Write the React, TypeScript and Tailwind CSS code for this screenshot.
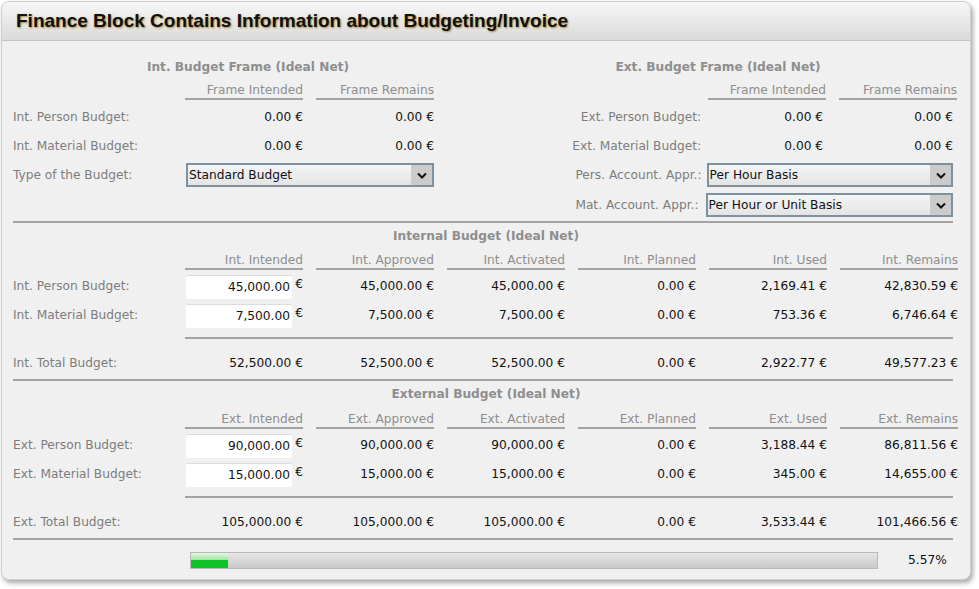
import React from "react";

type Row = { label: string; values: string[]; input?: boolean };

const intRows: Row[] = [
  { label: "Int. Person Budget:", values: ["45,000.00", "45,000.00 €", "45,000.00 €", "0.00 €", "2,169.41 €", "42,830.59 €"], input: true },
  { label: "Int. Material Budget:", values: ["7,500.00", "7,500.00 €", "7,500.00 €", "0.00 €", "753.36 €", "6,746.64 €"], input: true },
];
const intTotal: Row = { label: "Int. Total Budget:", values: ["52,500.00 €", "52,500.00 €", "52,500.00 €", "0.00 €", "2,922.77 €", "49,577.23 €"] };

const extRows: Row[] = [
  { label: "Ext. Person Budget:", values: ["90,000.00", "90,000.00 €", "90,000.00 €", "0.00 €", "3,188.44 €", "86,811.56 €"], input: true },
  { label: "Ext. Material Budget:", values: ["15,000.00", "15,000.00 €", "15,000.00 €", "0.00 €", "345.00 €", "14,655.00 €"], input: true },
];
const extTotal: Row = { label: "Ext. Total Budget:", values: ["105,000.00 €", "105,000.00 €", "105,000.00 €", "0.00 €", "3,533.44 €", "101,466.56 €"] };

const grid = "grid grid-cols-[159px_repeat(6,118px)] gap-x-[13px]";

function ColHead({ text }: { text: string }) {
  return (
    <div className="flex items-end justify-end border-b-2 border-[#a3a3a3] pb-[1px] leading-[14px] text-[#8e8e8e]">
      {text}
    </div>
  );
}

function Select({ value, className }: { value: string; className: string }) {
  return (
    <div className={`flex h-[24px] items-stretch border-2 border-[#7d919f] bg-gradient-to-b from-[#f3f5f6] to-[#e4e4e4] ${className}`}>
      <div className="flex flex-1 items-center pl-[1px] pt-[1px] text-[#111]">{value}</div>
      <div className="flex w-[21px] items-center justify-center bg-[#cbcbcb]">
        <svg width="10" height="7" viewBox="0 0 10 7">
          <path d="M1 1.5 L5 5.5 L9 1.5" fill="none" stroke="#111" strokeWidth="2" />
        </svg>
      </div>
    </div>
  );
}

function BudgetRow({ row }: { row: Row }) {
  return (
    <div className={`${grid} h-[29px] items-center pt-[2px]`}>
      <div className="text-[#7d7d7d]">{row.label}</div>
      {row.values.map((v, i) =>
        i === 0 && row.input ? (
          <div key={i} className="flex items-center">
            <div className="ml-[1px] flex h-[24px] w-[106px] items-center justify-end rounded-[2px] border-t border-[#dcdcdc] bg-white pr-[2px] pt-[1px] text-[#111]">
              {v}
            </div>
            <span className="ml-auto -translate-y-[2px] text-[#111]">€</span>
          </div>
        ) : (
          <div key={i} className="text-right text-[#111]">{v}</div>
        )
      )}
    </div>
  );
}

function TotalRow({ row }: { row: Row }) {
  return (
    <div className={`${grid} h-[40px] items-center pt-[9px]`}>
      <div className="text-[#7d7d7d]">{row.label}</div>
      {row.values.map((v, i) => (
        <div key={i} className="text-right text-[#111]">{v}</div>
      ))}
    </div>
  );
}

function Section({ title, heads, rows, total, headH }: { title: string; heads: string[]; rows: Row[]; total: Row; headH: string }) {
  return (
    <div>
      <div className="mt-[5px] h-[16px] text-center font-bold leading-[16px] text-[#8e8e8e]">{title}</div>
      <div className={`${grid} ${headH}`}>
        <div />
        {heads.map((h) => (
          <ColHead key={h} text={h} />
        ))}
      </div>
      <div className="mt-[1px]">
        {rows.map((r) => (
          <BudgetRow key={r.label} row={r} />
        ))}
      </div>
      <div className="ml-[172px] mt-[8px] h-[2px] w-[768px] bg-[#a3a3a3]" />
      <TotalRow row={total} />
      <div className="h-[2px] w-[940px] bg-[#a3a3a3]" />
    </div>
  );
}

export default function App() {
  return (
    <div className="h-[589px] w-[979px] bg-white pl-[1px] pt-[1px] font-['DejaVu_Sans',sans-serif] text-[12.2px]">
      <div className="h-[579px] w-[970px] overflow-hidden rounded-[8px] border border-[#cfcfcf] bg-[#f0f0f0] shadow-[2px_3px_5px_rgba(0,0,0,0.35)]">
        <div className="flex h-[39px] items-center border-b border-[#c4c4c4] bg-gradient-to-b from-[#f7f7f7] to-[#dadada] pl-[14px]">
          <h1 className="font-['Liberation_Sans',sans-serif] text-[19px] font-bold text-[#111] [text-shadow:1px_1px_2px_#a8873f]">
            Finance Block Contains Information about Budgeting/Invoice
          </h1>
        </div>

        <div className="px-[11px]">
          {/* frame section */}
          <div className="flex pt-[18px]">
            <div className="w-[470px]">
              <div className="h-[16px] text-center font-bold leading-[16px] text-[#8e8e8e]">Int. Budget Frame (Ideal Net)</div>
              <div className="grid h-[25px] grid-cols-[159px_118px_118px] gap-x-[13px]">
                <div />
                <ColHead text="Frame Intended" />
                <ColHead text="Frame Remains" />
              </div>
              <div className="mt-[2px] grid grid-cols-[159px_118px_118px] gap-x-[13px] [&>div]:h-[29px]">
                <div className="flex items-center pt-[2px] text-[#7d7d7d]">Int. Person Budget:</div>
                <div className="flex items-center justify-end pt-[2px] text-[#111]">0.00 €</div>
                <div className="flex items-center justify-end pt-[2px] text-[#111]">0.00 €</div>
                <div className="flex items-center pt-[2px] text-[#7d7d7d]">Int. Material Budget:</div>
                <div className="flex items-center justify-end pt-[2px] text-[#111]">0.00 €</div>
                <div className="flex items-center justify-end pt-[2px] text-[#111]">0.00 €</div>
                <div className="flex !h-[30px] items-center text-[#7d7d7d]">Type of the Budget:</div>
                <div className="col-span-2 flex !h-[30px] items-center">
                  <Select value="Standard Budget" className="ml-[1px] w-[248px]" />
                </div>
              </div>
            </div>

            <div className="w-[470px]">
              <div className="h-[16px] text-center font-bold leading-[16px] text-[#8e8e8e]">Ext. Budget Frame (Ideal Net)</div>
              <div className="grid h-[25px] grid-cols-[212px_118px_118px] gap-x-[13px]">
                <div />
                <ColHead text="Frame Intended" />
                <ColHead text="Frame Remains" />
              </div>
              <div className="mt-[2px]">
                <div className="flex h-[29px] items-center pt-[2px]">
                  <div className="w-[220px] text-right text-[#7d7d7d]">Ext. Person Budget:</div>
                  <div className="ml-[5px] w-[118px] text-right text-[#111]">0.00 €</div>
                  <div className="ml-[13px] w-[118px] text-right text-[#111]">0.00 €</div>
                </div>
                <div className="flex h-[29px] items-center pt-[2px]">
                  <div className="w-[220px] text-right text-[#7d7d7d]">Ext. Material Budget:</div>
                  <div className="ml-[5px] w-[118px] text-right text-[#111]">0.00 €</div>
                  <div className="ml-[13px] w-[118px] text-right text-[#111]">0.00 €</div>
                </div>
                <div className="flex h-[30px] items-center">
                  <div className="w-[220px] text-right text-[#7d7d7d]">Pers. Account. Appr.:</div>
                  <Select value="Per Hour Basis" className="ml-[5px] w-[248px]" />
                </div>
                <div className="flex h-[30px] items-center">
                  <div className="w-[216px] text-right text-[#7d7d7d]">Mat. Account. Appr.:</div>
                  <Select value="Per Hour or Unit Basis" className="ml-[7px] w-[248px]" />
                </div>
              </div>
            </div>
          </div>

          <div className="mt-[1px] h-[2px] w-[940px] bg-[#a3a3a3]" />

          <Section
            title="Internal Budget (Ideal Net)"
            heads={["Int. Intended", "Int. Approved", "Int. Activated", "Int. Planned", "Int. Used", "Int. Remains"]}
            rows={intRows}
            total={intTotal}
            headH="h-[26px]"
          />
          <Section
            title="External Budget (Ideal Net)"
            heads={["Ext. Intended", "Ext. Approved", "Ext. Activated", "Ext. Planned", "Ext. Used", "Ext. Remains"]}
            rows={extRows}
            total={extTotal}
            headH="h-[27px]"
          />

          <div className="mt-[11px] flex items-center">
            <div className="ml-[177px] flex h-[17px] w-[688px] border border-[#b9b9b9] bg-gradient-to-b from-[#e6e6e6] to-[#c9c9c9]">
              <div className="flex w-[37px] flex-col">
                <div className="h-1/2 bg-gradient-to-b from-[#e2fbe2] to-[#9fe59f]" />
                <div className="h-1/2 bg-[#0fc22a]" />
              </div>
            </div>
            <div className="ml-[30px] text-[#111]">5.57%</div>
          </div>
        </div>
      </div>
    </div>
  );
}
